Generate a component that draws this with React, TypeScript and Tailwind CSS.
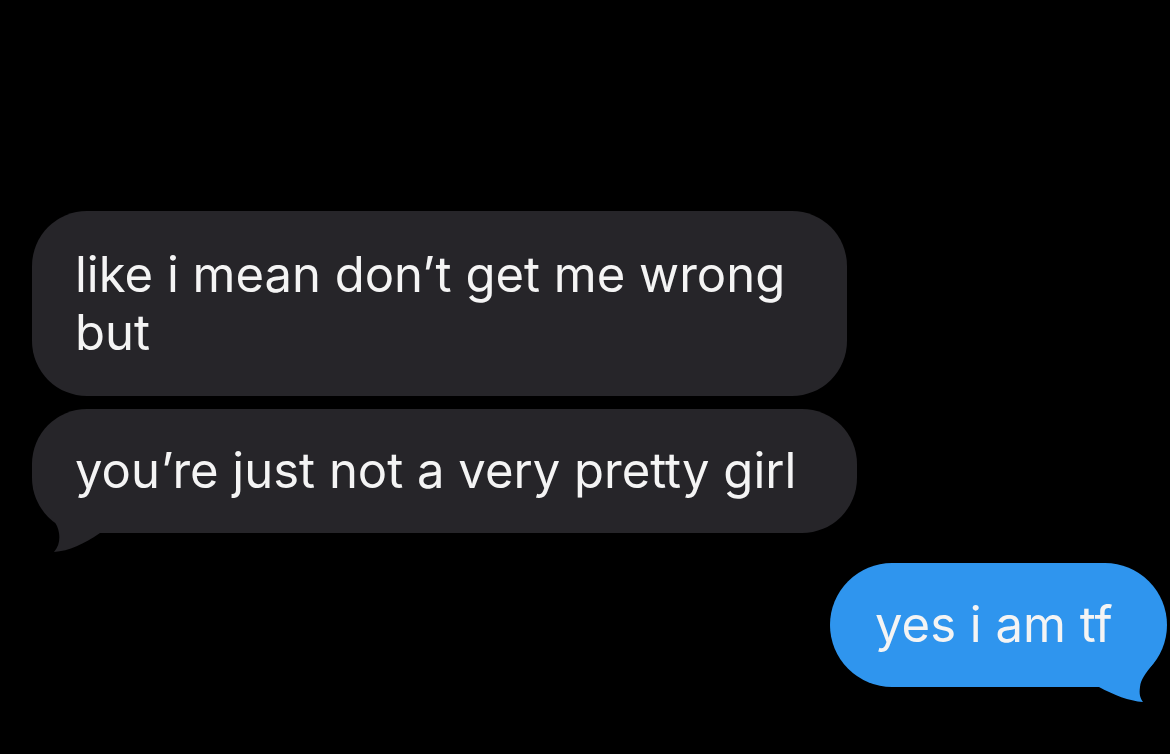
import React from 'react';

type Side = 'them' | 'me';

interface Message {
  id: number;
  from: Side;
  lines: string[];
  tail?: boolean;
}

const messages: Message[] = [
  { id: 1, from: 'them', lines: ['like i mean don\u2019t get me wrong', 'but'] },
  { id: 2, from: 'them', lines: ['you\u2019re just not a very pretty girl'], tail: true },
  { id: 3, from: 'me', lines: ['yes i am tf'], tail: true },
];

// little curled tails under the last bubble of each side
function GrayTail() {
  return (
    <svg className="absolute left-0 top-[70px]" width="80" height="80" viewBox="0 70 80 80">
      <path d="M4 77 C7 100 25 108 27 124 C28 131 27 137 22 143 C37 142 52 135 68 124 L68 77 Z" fill="#262529" />
    </svg>
  );
}

function BlueTail() {
  return (
    <svg className="absolute right-0 top-[70px]" width="80" height="80" viewBox="257 70 80 80">
      <path d="M333 77 C330 100 312 108 310 124 C309 131 310 135 313 139 C299 138 284 132 269 124 L269 77 Z" fill="#2f95ee" />
    </svg>
  );
}

function Bubble({ msg }: { msg: Message }) {
  const isMe = msg.from === 'me';
  return (
    <div className={`flex ${isMe ? 'justify-end' : 'justify-start'}`}>
      <div
        className={`relative ${
          isMe
            ? 'bg-[#2f95ee] rounded-[62px] w-[337px] h-[124px] pl-[45px]'
            : 'bg-[#262529] rounded-[55px] pl-[43px] pr-[40px]'
        } ${msg.id === 1 ? 'w-[815px] h-[185px] rounded-[50px] py-[35px]' : ''} ${
          msg.id === 2 ? 'w-[825px] h-[124px] py-[33px]' : ''
        } ${isMe ? 'py-[33px]' : ''}`}
      >
        {msg.tail && (isMe ? <BlueTail /> : <GrayTail />)}
        <div className="relative text-[49px] leading-[58px] text-[#f4f4f4] whitespace-nowrap">
          {msg.lines.map((l) => (
            <div key={l}>{l}</div>
          ))}
        </div>
      </div>
    </div>
  );
}

export default function App() {
  return (
    <div
      className="w-[1170px] h-[754px] bg-black overflow-hidden pt-[211px] pl-[32px] pr-[3px]"
      style={{ fontFamily: 'Inter, "Liberation Sans", sans-serif' }}
    >
      <div className="flex flex-col">
        <Bubble msg={messages[0]} />
        <div className="h-[13px]" />
        <Bubble msg={messages[1]} />
        <div className="h-[30px]" />
        <Bubble msg={messages[2]} />
      </div>
    </div>
  );
}
